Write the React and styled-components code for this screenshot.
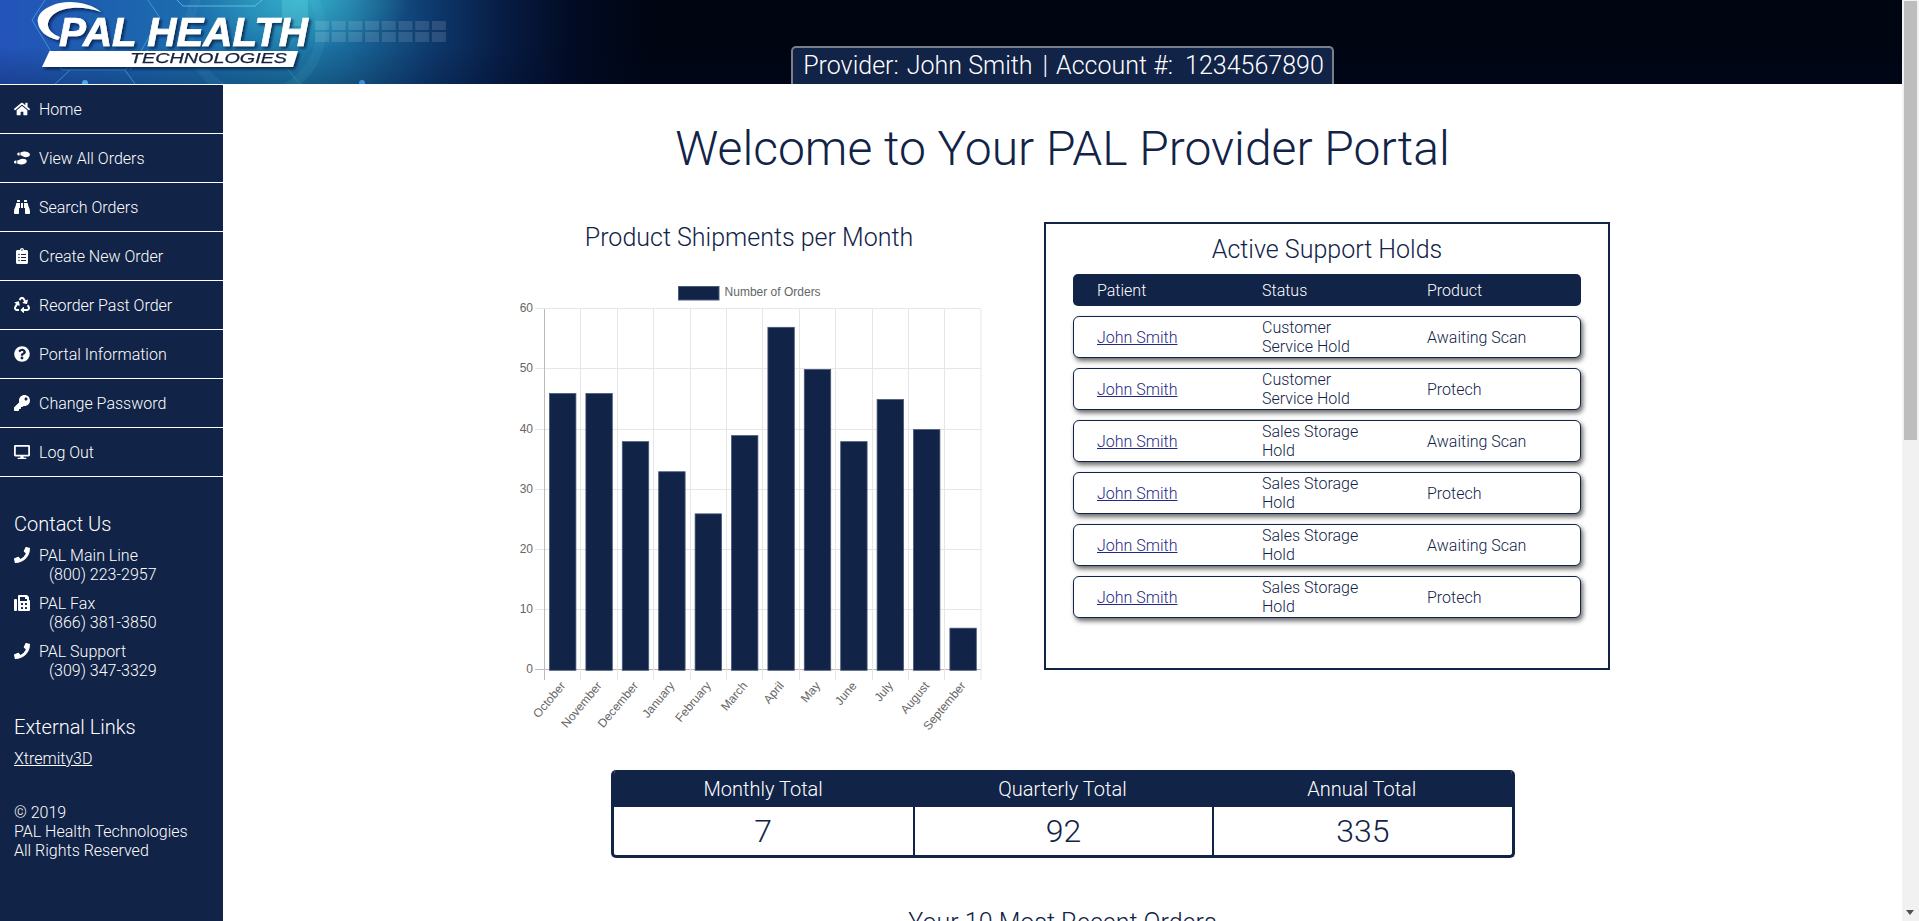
import React from "react";
import styled, { createGlobalStyle } from "styled-components";
import {
  FaHome, FaShoePrints, FaBinoculars, FaClipboardList, FaRecycle,
  FaQuestionCircle, FaKey, FaDesktop, FaPhoneAlt, FaFax,
} from "react-icons/fa";

const NAVY = "#112347";

const Global = createGlobalStyle`
  body { margin: 0; font-family: Roboto, "Liberation Sans", sans-serif; font-weight: 300; color: ${NAVY}; background: #fff; }
  * { box-sizing: border-box; }
`;

const Page = styled.div`
  width: calc(100vw - 17px);
`;
const ScrollTrack = styled.div`
  position: fixed;
  top: 0;
  right: 0;
  bottom: 0;
  width: 17px;
  background: #f1f1f1;
`;
const ScrollThumb = styled.div`
  position: absolute;
  top: 1px;
  left: 2px;
  width: 13px;
  height: 439px;
  background: #bdbdbd;
`;
const ScrollArrow = styled.div`
  position: absolute;
  bottom: 6px;
  left: 4px;
  width: 0;
  height: 0;
  border-left: 4.5px solid transparent;
  border-right: 4.5px solid transparent;
  border-top: 5px solid #505050;
`;

const Header = styled.header`
  position: relative;
  height: 84px;
  display: flex;
  overflow: hidden;
  background:
    radial-gradient(ellipse 110px 50px at 300px 0px, rgba(70, 215, 225, 0.55), transparent 100%),
    linear-gradient(180deg, rgba(0, 0, 20, 0) 55%, rgba(0, 10, 40, 0.25) 100%),
    linear-gradient(90deg, #2453ba 0, #1d5fb0 90px, #1c70ac 220px, #1e7cab 300px, #1a6a9c 345px, #0e3a6e 430px, #071d45 500px, #020b24 570px, #000512 650px, #000512 100%);
`;
const HeaderArt = styled.svg`
  position: absolute;
  left: 0;
  top: 0;
`;
const LogoSpace = styled.div`
  width: 223px;
  flex: none;
`;
const BadgeSlot = styled.div`
  flex: 1;
  display: flex;
  justify-content: center;
  align-items: flex-end;
`;
const Badge = styled.div`
  position: relative;
  height: 38px;
  padding: 0 8px 0 10px;
  background: ${NAVY};
  color: #fff;
  border: 2px solid #7a7f88;
  border-bottom: 0;
  border-radius: 5px 5px 0 0;
  font-size: 25px;
  line-height: 36px;
  white-space: pre;
`;
const BadgeGap = styled.span`
  margin-right: 2px;
`;
const BadgeSep = styled.span`
  margin: 0 8px 0 10px;
`;

const Body = styled.div`
  display: flex;
  align-items: stretch;
`;
const Sidebar = styled.aside`
  width: 223px;
  flex: none;
  margin-top: 1px;
  background: ${NAVY};
  color: #fff;
  min-height: 1810px;
`;
const NavList = styled.nav`
  display: flex;
  flex-direction: column;
`;
const NavItem = styled.a`
  height: 49px;
  display: flex;
  align-items: center;
  padding-left: 14px;
  border-bottom: 1px solid #fff;
  color: #fff;
  font-size: 16px;
  font-weight: 300;
`;
const NavIcon = styled.span`
  width: 25px;
  flex: none;
  display: flex;
  align-items: center;
  svg { height: 16px; width: auto; }
`;
const SideSection = styled.section`
  padding: ${(p) => p.$pad || "0"};
  display: flex;
  flex-direction: column;
`;
const SideHeading = styled.h3`
  margin: 0;
  font-size: 20px;
  font-weight: 300;
  line-height: 24px;
  padding-left: 14px;
`;
const ContactRow = styled.div`
  position: relative;
  padding-left: 39px;
  font-size: 16px;
  line-height: 19px;
  margin-top: ${(p) => p.$mt}px;
`;
const ContactIcon = styled.span`
  position: absolute;
  left: 14px;
  top: 1px;
  svg { height: 16px; width: auto; display: block; transform: ${(p) => (p.$flip ? "scaleX(-1)" : "none")}; }
`;
const Phone = styled.div`
  padding-left: 10px;
`;
const ExtLink = styled.a`
  display: inline-block;
  margin: 10px 0 0 14px;
  color: #fff;
  font-size: 16px;
  line-height: 19px;
  text-decoration: underline;
`;
const FootNote = styled.div`
  margin: 35px 0 0 14px;
  font-size: 16px;
  line-height: 19px;
`;

const Main = styled.main`
  flex: 1;
  min-width: 0;
  padding-top: 36px;
  background: #fff;
`;
const Title = styled.h1`
  margin: 0;
  height: 102px;
  text-align: center;
  font-size: 48px;
  font-weight: 300;
  line-height: 57px;
`;
const DashRow = styled.div`
  display: flex;
  align-items: flex-start;
  gap: 45px;
  padding-left: 276px;
`;
const ChartCol = styled.div`
  width: 500px;
  flex: none;
`;
const SectionTitle = styled.h2`
  margin: 0;
  padding-top: 1px;
  text-align: center;
  font-size: 25px;
  font-weight: 300;
  line-height: 30px;
`;
const ChartSvg = styled.svg`
  display: block;
  margin-top: 17px;
`;
const HoldsBox = styled.div`
  width: 566px;
  height: 448px;
  border: 2px solid ${NAVY};
  padding: 10px 27px 0;
  display: flex;
  flex-direction: column;
`;
const HoldsHead = styled.div`
  margin-top: 9px;
  height: 32px;
  border-radius: 5px;
  background: ${NAVY};
  color: #fff;
  font-weight: 300;
  display: grid;
  grid-template-columns: 165px 165px 1fr;
  align-items: center;
  padding: 0 24px;
  font-size: 16px;
  margin-bottom: 10px;
`;
const HoldRow = styled.div`
  height: 42px;
  margin-bottom: 10px;
  border: 1.5px solid ${NAVY};
  border-radius: 6px;
  box-shadow: 2px 3px 5px rgba(0, 0, 0, 0.6);
  display: grid;
  grid-template-columns: 165px 165px 1fr;
  align-items: center;
  padding: 0 23px;
  font-size: 16px;
  line-height: 19px;
  background: #fff;
`;
const StatusCell = styled.div`
  max-width: 108px;
`;
const PatientLink = styled.a`
  color: #1f2a84;
  text-decoration: underline;
`;
const Totals = styled.div`
  width: 904px;
  margin: 20px auto 0;
  border-radius: 5px;
  overflow: hidden;
  border: solid ${NAVY};
  border-width: 0 3px 3px;
  display: grid;
  grid-template-columns: repeat(3, 1fr);
`;
const TotalHead = styled.div`
  height: 37px;
  background: ${NAVY};
  color: #fff;
  text-align: center;
  font-size: 20px;
  line-height: 39px;
  margin: 0 -1px;
`;
const TotalValue = styled.div`
  height: 48px;
  text-align: center;
  font-size: 32px;
  line-height: 49px;
  border-left: ${(p) => (p.$first ? "0" : `2px solid ${NAVY}`)};
`;
const Recent = styled(SectionTitle)`
  margin-top: 49px;
`;
const RecentList = styled.div`
  width: 1100px;
  margin: 20px auto 40px;
  display: flex;
  flex-direction: column;
  gap: 10px;
`;
const RecentHead = styled(HoldsHead)`
  margin: 0;
  grid-template-columns: repeat(4, 1fr);
`;
const RecentRow = styled(HoldRow)`
  margin: 0;
  grid-template-columns: repeat(4, 1fr);
  height: 64px;
`;

const nav = [
  [FaHome, "Home"],
  [FaShoePrints, "View All Orders"],
  [FaBinoculars, "Search Orders"],
  [FaClipboardList, "Create New Order"],
  [FaRecycle, "Reorder Past Order"],
  [FaQuestionCircle, "Portal Information"],
  [FaKey, "Change Password"],
  [FaDesktop, "Log Out"],
];
const holds = [
  ["Customer Service Hold", "Awaiting Scan"],
  ["Customer Service Hold", "Protech"],
  ["Sales Storage Hold", "Awaiting Scan"],
  ["Sales Storage Hold", "Protech"],
  ["Sales Storage Hold", "Awaiting Scan"],
  ["Sales Storage Hold", "Protech"],
];
const months = ["October","November","December","January","February","March","April","May","June","July","August","September"];
const values = [46,46,38,33,26,39,57,50,38,45,40,7];

function BarChart() {
  const y0 = 670.3, unit = 6.017, step = 36.4;
  return (
    <ChartSvg width="500" height="480" viewBox="499 270 500 480">
      <rect x="678.5" y="286.5" width="40.5" height="13.5" fill={NAVY} stroke="#4a5a7c" />
      <text x="724.6" y="296.3" fontFamily="Liberation Sans" fontSize="12" fill="#666">Number of Orders</text>
      {[0,1,2,3,4,5,6].map((i) => {
        const y = Math.round(y0 - i * 10 * unit) - 0.5;
        return (
          <g key={i}>
            <line x1="535" x2="981" y1={y} y2={y} stroke={i === 0 ? "#bbb" : "#e6e6e6"} />
            <text x="533" y={y + 3.5} textAnchor="end" fontFamily="Liberation Sans" fontSize="12" fill="#666">{i * 10}</text>
          </g>
        );
      })}
      {months.map((m, i) => {
        const x = Math.round(544 + i * step) + 0.5;
        return <line key={m} x1={x} x2={x} y1="309" y2="680" stroke={i === 0 ? "#bbb" : "#e6e6e6"} />;
      })}
      <line x1="981" x2="981" y1="309" y2="680" stroke="#e6e6e6" />
      {values.map((v, i) => (
        <rect key={i} x={549.5 + i * step} y={y0 - v * unit} width="26.4" height={v * unit} fill={NAVY} stroke="#46577a" strokeWidth="0.8" />
      ))}
      {months.map((m, i) => {
        const x = 566 + i * step;
        return (
          <text key={m} x={x} y="686" textAnchor="end" fontFamily="Liberation Sans" fontSize="12" fill="#666" transform={`rotate(-50 ${x} 686)`}>{m}</text>
        );
      })}
    </ChartSvg>
  );
}

function LogoArt() {
  const tiles = [];
  for (let i = 0; i < 8; i++) {
    tiles.push(<rect key={`a${i}`} x={315 + i * 16.7} y="21" width="14" height="9" fill="#fff" opacity="0.13" />);
    tiles.push(<rect key={`b${i}`} x={315 + i * 16.7} y="32" width="14" height="10" fill="#fff" opacity="0.13" />);
  }
  return (
    <HeaderArt width="520" height="84" viewBox="0 0 520 84">
      <defs>
        <filter id="ls" x="-5%" y="-10%" width="112%" height="130%">
          <feDropShadow dx="2" dy="2" stdDeviation="1.5" floodColor="#001030" floodOpacity="0.75" />
        </filter>
      </defs>
      <g fill="none" stroke="#5cc0ee" strokeWidth="1" opacity="0.55">
        <path d="M45 0 L32 20 L62 70 L125 70 L148 50" />
        <path d="M177 0 L183 6 L255 6 L262 0" stroke="#8fe8f0" />
        <path d="M148 0 L160 18 L130 70" />
        <path d="M55 84 L70 70" />
        <path d="M125 70 L135 84" />
        <path d="M300 84 L280 60 L300 30" opacity="0.5" />
      </g>
      <g fill="none" stroke="#7fd4ea" opacity="0.08">
        <circle cx="255" cy="30" r="66" strokeWidth="10" />
      </g>
      <rect x="282" y="0" width="26" height="26" fill="#6fe0e6" opacity="0.25" />
      <circle cx="85" cy="83" r="3" fill="#49a8ea" />
      <circle cx="362" cy="83" r="3" fill="#3b8fd8" />
      {tiles}
      <g filter="url(#ls)">
        <path d="M101 12 C 92 4, 74 0, 60 3 C 46 6, 36 14, 38 23 C 39 31, 46 37, 58 40 L 60 37 C 52 34, 47 29, 48 23 C 50 14, 60 9, 72 8 C 82 7, 93 9, 101 12 Z" fill="#fff" />
        <text x="59" y="46" fontFamily="Liberation Sans" fontWeight="700" fontStyle="italic" fontSize="41" fill="#fff" stroke="#fff" strokeWidth="0.7" textLength="249" lengthAdjust="spacingAndGlyphs">PAL HEALTH</text>
        <path d="M49.5 51 L298 51 L293 67 L42 67 Z" fill="#fff" />
        <text x="130" y="62.5" fontFamily="Liberation Sans" fontWeight="400" fontStyle="italic" fontSize="14" fill="#14233f" stroke="#14233f" strokeWidth="0.25" textLength="157" lengthAdjust="spacingAndGlyphs">TECHNOLOGIES</text>
      </g>
    </HeaderArt>
  );
}

export default function App() {
  return (
    <Page>
      <Global />
      <ScrollTrack>
        <ScrollThumb />
        <ScrollArrow />
      </ScrollTrack>
      <Header>
        <LogoArt />
        <LogoSpace />
        <BadgeSlot>
          <Badge>Provider: <BadgeGap />John Smith<BadgeSep>|</BadgeSep>{"Account #:  1234567890"}</Badge>
        </BadgeSlot>
      </Header>
      <Body>
        <Sidebar>
          <NavList>
            {nav.map(([Icon, label]) => (
              <NavItem key={label}>
                <NavIcon><Icon /></NavIcon>
                {label}
              </NavItem>
            ))}
          </NavList>
          <SideSection $pad="35px 0 0">
            <SideHeading>Contact Us</SideHeading>
            <ContactRow $mt={10}>
              <ContactIcon $flip><FaPhoneAlt /></ContactIcon>
              PAL Main Line
              <Phone>(800) 223-2957</Phone>
            </ContactRow>
            <ContactRow $mt={10}>
              <ContactIcon><FaFax /></ContactIcon>
              PAL Fax
              <Phone>(866) 381-3850</Phone>
            </ContactRow>
            <ContactRow $mt={10}>
              <ContactIcon $flip><FaPhoneAlt /></ContactIcon>
              PAL Support
              <Phone>(309) 347-3329</Phone>
            </ContactRow>
          </SideSection>
          <SideSection $pad="35px 0 0">
            <SideHeading>External Links</SideHeading>
            <div><ExtLink>Xtremity3D</ExtLink></div>
            <FootNote>
              © 2019<br />PAL Health Technologies<br />All Rights Reserved
            </FootNote>
          </SideSection>
        </Sidebar>
        <Main>
          <Title>Welcome to Your PAL Provider Portal</Title>
          <DashRow>
            <ChartCol>
              <SectionTitle>Product Shipments per Month</SectionTitle>
              <BarChart />
            </ChartCol>
            <HoldsBox>
              <SectionTitle>Active Support Holds</SectionTitle>
              <HoldsHead>
                <div>Patient</div><div>Status</div><div>Product</div>
              </HoldsHead>
              {holds.map(([status, product], i) => (
                <HoldRow key={i}>
                  <div><PatientLink>John Smith</PatientLink></div>
                  <StatusCell>{status}</StatusCell>
                  <div>{product}</div>
                </HoldRow>
              ))}
            </HoldsBox>
          </DashRow>
          <Totals>
            <TotalHead>Monthly Total</TotalHead>
            <TotalHead>Quarterly Total</TotalHead>
            <TotalHead>Annual Total</TotalHead>
            <TotalValue $first>7</TotalValue>
            <TotalValue>92</TotalValue>
            <TotalValue>335</TotalValue>
          </Totals>
          <Recent>Your 10 Most Recent Orders</Recent>
          <RecentList>
            <RecentHead>
              <div>Patient</div><div>Order</div><div>Status</div><div>Product</div>
            </RecentHead>
            {Array.from({ length: 10 }, (_, i) => (
              <RecentRow key={i}>
                <div><PatientLink>John Smith</PatientLink></div>
                <div>{1000 + i}</div>
                <div>Shipped</div>
                <div>Protech</div>
              </RecentRow>
            ))}
          </RecentList>
        </Main>
      </Body>
    </Page>
  );
}
